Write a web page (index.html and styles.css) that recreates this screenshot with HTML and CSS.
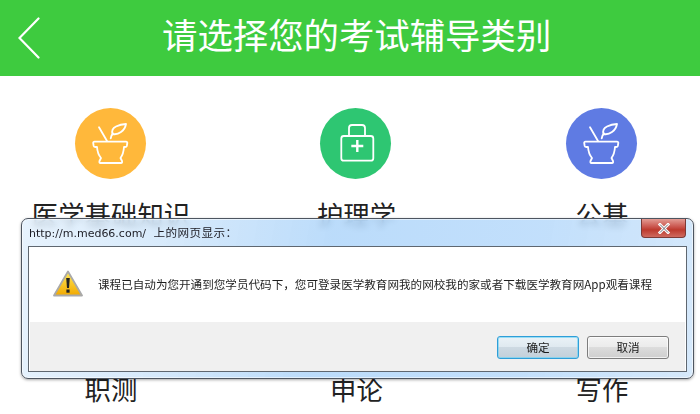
FILE: index.html
```html
<!DOCTYPE html>
<html lang="zh-CN">
<head>
<meta charset="utf-8">
<title>请选择您的考试辅导类别</title>
<link rel="stylesheet" href="styles.css">
</head>
<body>
<div class="page">
  <header class="topbar">
    <svg class="back" width="22" height="42" viewBox="0 0 22 42"><path d="M20.5 1.5 L1.5 21 L20.5 40.5" fill="none" stroke="#fff" stroke-width="2.2" stroke-linecap="round" stroke-linejoin="miter"/></svg>
    <h1 class="title">请选择您的考试辅导类别</h1>
  </header>
  <main class="grid">
    <div class="item"><span class="badge orange"><svg viewBox="0 0 71 71" width="71" height="71"><use href="#mortar"/></svg></span><span class="label">医学基础知识</span></div>
    <div class="item"><span class="badge green"><svg viewBox="0 0 71 71" width="71" height="71"><use href="#kit"/></svg></span><span class="label">护理学</span></div>
    <div class="item"><span class="badge blue"><svg viewBox="0 0 71 71" width="71" height="71"><use href="#mortar"/></svg></span><span class="label">公基</span></div>
    <div class="item"><span class="badge orange"></span><span class="label">职测</span></div>
    <div class="item"><span class="badge green"></span><span class="label">申论</span></div>
    <div class="item"><span class="badge blue"></span><span class="label">写作</span></div>
  </main>
  <svg class="defs" width="0" height="0">
    <defs>
      <g id="mortar" fill="none" stroke="#fff" stroke-width="1.8" stroke-linecap="round" stroke-linejoin="round">
        <path d="M19.5 33.7 H51 Q52.5 33.7 52.3 35 L51.8 38 Q51.5 39 50 39 H49 Q48.5 46 45.5 50 L47 53 Q47.5 55 46 55 H25.5 Q24 55 24.5 53 L26 50 Q22.5 46 22 39 H20.5 Q19 39 18.7 38 L18.2 35 Q18 33.7 19.5 33.7 Z"/>
        <path d="M24 19.3 L32 33"/>
        <path d="M35.7 30.3 Q36 27.5 38 25.5"/>
        <path d="M37.5 26 Q36 21 41 18.5 Q45.5 16.3 51 16 Q50 21.5 46 24 Q42 27 37.5 26 Z"/>
      </g>
      <g id="kit" fill="none" stroke="#fff" stroke-width="1.8" stroke-linecap="round" stroke-linejoin="round">
        <rect x="21.3" y="28" width="32" height="24.7" rx="2.5"/>
        <path d="M29 27.5 V20 Q29 17 32 17 H42 Q45 17 45 20 V27.5"/>
        <path d="M37.3 32 V44 M31.3 38 H43.3" stroke-width="2.4" stroke-linecap="butt"/>
      </g>
    </defs>
  </svg>

  <div class="window" role="dialog">
    <div class="caption">
      <span class="caption-text">http://m.med66.com/ <span class="caption-cjk">上的网页显示：</span></span>
      <span class="close"><svg width="14" height="11" viewBox="0 0 14 11"><path d="M3 1.5 L11 9.5 M11 1.5 L3 9.5" stroke="#fff" stroke-width="3" stroke-linecap="square"/><path d="M3 1.5 L11 9.5 M11 1.5 L3 9.5" stroke="#6e6e78" stroke-width="1"/></svg></span>
    </div>
    <div class="panel">
      <div class="message">
        <svg class="warn" width="30" height="27" viewBox="0 0 30 27">
          <defs><linearGradient id="amber" x1="0" y1="0" x2="0" y2="1"><stop offset="0" stop-color="#ffe95a"/><stop offset="1" stop-color="#f2a900"/></linearGradient></defs>
          <path d="M15 1.5 L29 25.5 H1 Z" fill="url(#amber)" stroke="#a9a9a9" stroke-width="1.8" stroke-linejoin="round"/>
          <path d="M13.2 8 H16.8 L16 18 H14 Z" fill="#222"/>
          <rect x="13.4" y="19.5" width="3.2" height="3.2" fill="#222"/>
        </svg>
        <p class="text">课程已自动为您开通到您学员代码下，您可登录医学教育网我的网校我的家或者下载医学教育网App观看课程</p>
      </div>
      <div class="actions">
        <button class="btn primary">确定</button>
        <button class="btn">取消</button>
      </div>
    </div>
  </div>
</div>
</body>
</html>
```

FILE: styles.css
```css
* { box-sizing: border-box; }
html, body { margin: 0; padding: 0; background: #fff; }
body { font-family: "Noto Sans CJK SC", "Liberation Sans", sans-serif; }

.page { position: relative; width: 700px; height: 414px; overflow: hidden; }

.topbar {
  height: 76px;
  background: #3ecb3f;
  display: flex;
  align-items: center;
  padding-left: 18px;
}
.back { flex: none; margin-top: -1px; }
.title {
  margin: -8px 0 0 122px;
  font-size: 35.4px;
  font-weight: 400;
  line-height: 1;
  color: #fff;
  white-space: nowrap;
}

.grid {
  display: grid;
  grid-template-columns: repeat(3, 158px);
  column-gap: 87.5px;
  row-gap: 0;
  padding: 32px 0 0 31px;
}
.item {
  display: flex;
  flex-direction: column;
  align-items: center;
  height: 175px;
}
.badge { width: 71px; height: 71px; border-radius: 50%; display: block; flex: none; }
.badge svg { display: block; }
.orange { background: #ffb83b; }
.green { background: #2ec672; }
.blue { background: #5f7be3; }
.label {
  margin: 17px 0 0 2px;
  font-size: 26.4px;
  line-height: 36px;
  color: #222;
  white-space: nowrap;
}
.defs { position: absolute; }

.window {
  position: absolute;
  left: 21px;
  top: 218px;
  width: 673px;
  height: 161px;
  border: 1px solid #4d5560;
  border-radius: 7px;
  padding: 0 6px 6px 6px;
  display: flex;
  flex-direction: column;
  background: linear-gradient(100deg, rgba(226,240,253,.82) 0%, rgba(208,230,250,.82) 20%, rgba(176,214,250,.86) 45%, rgba(184,218,251,.86) 75%, rgba(205,228,250,.82) 100%);
  backdrop-filter: blur(3px);
  box-shadow: 0 1px 3px rgba(0,0,0,.35), inset 0 0 0 1px rgba(255,255,255,.55);
}
.caption {
  height: 27px;
  flex: none;
  display: flex;
  align-items: flex-start;
  justify-content: space-between;
}
.caption-text {
  margin-top: 6px;
  font-family: "DejaVu Sans", "Noto Sans CJK SC", sans-serif;
  font-size: 11px;
  line-height: 14px;
  color: #1c1c24;
  white-space: nowrap;
  margin-left: 1px;
}
.caption-cjk {
  font-family: "Noto Sans CJK SC", sans-serif;
  font-size: 11.6px;
  letter-spacing: .4px;
  margin-left: 4px;
}
.close {
  width: 45px;
  height: 19px;
  margin-right: 1px;
  display: flex;
  align-items: center;
  justify-content: center;
  border: 1px solid #7d3a36;
  border-top: none;
  border-radius: 0 0 4px 4px;
  background: linear-gradient(#e39c94 0%, #c9524a 45%, #bd3a2e 60%, #cf6a5f 100%);
}
.panel {
  flex: 1;
  border: 1px solid #5f6770;
  background: #fff;
  display: flex;
  flex-direction: column;
  min-height: 0;
}
.message {
  height: 75px;
  flex: none;
  display: flex;
  align-items: center;
  padding: 0 0 0 24px;
}
.warn { flex: none; margin-top: -3px; }
.text {
  margin: -1px 0 0 15px;
  font-size: 11.58px;
  line-height: 14px;
  color: #1f1f1f;
  white-space: nowrap;
}
.actions {
  flex: 1;
  background: #f0f0f0;
  display: flex;
  justify-content: flex-end;
  gap: 8px;
  padding: 14px 16px 0 0;
  margin: 0 1px 0 1px;
}
.btn {
  width: 82px;
  height: 23px;
  padding: 0;
  font-family: "Noto Sans CJK SC", sans-serif;
  font-size: 11.6px;
  line-height: 1;
  color: #1a1a1a;
  border: 1px solid #7d7d7d;
  border-radius: 3px;
  background: linear-gradient(#f3f3f3 0%, #ebebeb 48%, #dcdcdc 50%, #cfcfcf 100%);
  box-shadow: inset 0 0 0 1px rgba(255,255,255,.7);
}
.btn.primary {
  border-color: #2f9ed8;
  background: linear-gradient(#eaf2f7 0%, #dfe9f0 48%, #cdd9e2 50%, #c3d0da 100%);
  box-shadow: inset 0 0 0 1px rgba(110,210,245,.65);
}
```
